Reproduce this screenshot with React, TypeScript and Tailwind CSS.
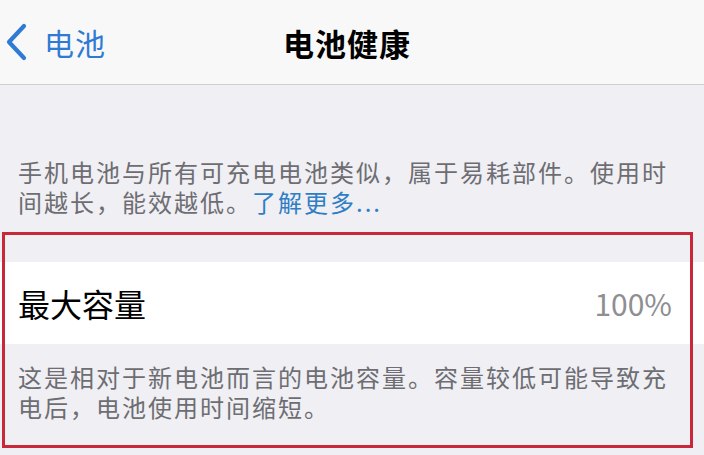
import { ReactNode } from 'react';

const font = { fontFamily: '"Noto Sans CJK SC", "Noto Sans", sans-serif' };

function ChevronLeft() {
  return (
    <svg width="24" height="38" viewBox="0 0 24 38" fill="none">
      <polyline
        points="19,3 4,19 19,35"
        stroke="#2f7bd4"
        strokeWidth="4.2"
        strokeLinecap="round"
        strokeLinejoin="round"
      />
    </svg>
  );
}

function FooterNote({ children, className = '' }: { children: ReactNode; className?: string }) {
  return (
    <p className={`pl-[18px] pr-[30px] text-[24px] leading-[30px] tracking-[2px] text-[#6d6d72] ${className}`}>
      {children}
    </p>
  );
}

export default function App() {
  return (
    <div className="w-[704px] h-[455px] overflow-hidden bg-[#efeff4]" style={font}>
      {/* Navigation bar */}
      <div className="relative h-[85px] bg-[#f8f8f8] border-b border-[#cfcfd3] flex items-center">
        <button className="flex items-center gap-[15px] pl-[5px] text-[#2f7bd4]">
          <ChevronLeft />
          <span className="text-[30px] leading-none tracking-[1px]">电池</span>
        </button>
        <h1 className="absolute left-[283px] text-[31px] leading-none font-bold text-black tracking-[1px]">
          电池健康
        </h1>
      </div>

      <FooterNote className="mt-[72px]">
        手机电池与所有可充电电池类似，属于易耗部件。使用时间越长，能效越低。
        <span className="text-[#2f7ec4]">了解更多...</span>
      </FooterNote>

      {/* Maximum capacity section */}
      <div className="relative mt-[15px]">
        <div className="h-[30px]" />
        <div className="h-[82px] bg-white flex items-center justify-between pl-[18px] pr-[32px]">
          <span className="text-[32px] leading-none text-black">最大容量</span>
          <span className="text-[30px] leading-none text-[#8e8e93]">100%</span>
        </div>
        <FooterNote className="pt-[18px] pb-[26px]">
          这是相对于新电池而言的电池容量。容量较低可能导致充电后，电池使用时间缩短。
        </FooterNote>
        <div className="absolute left-[2px] right-[11px] top-0 bottom-0 border-[3px] border-[#c7283a] pointer-events-none" />
      </div>
    </div>
  );
}
